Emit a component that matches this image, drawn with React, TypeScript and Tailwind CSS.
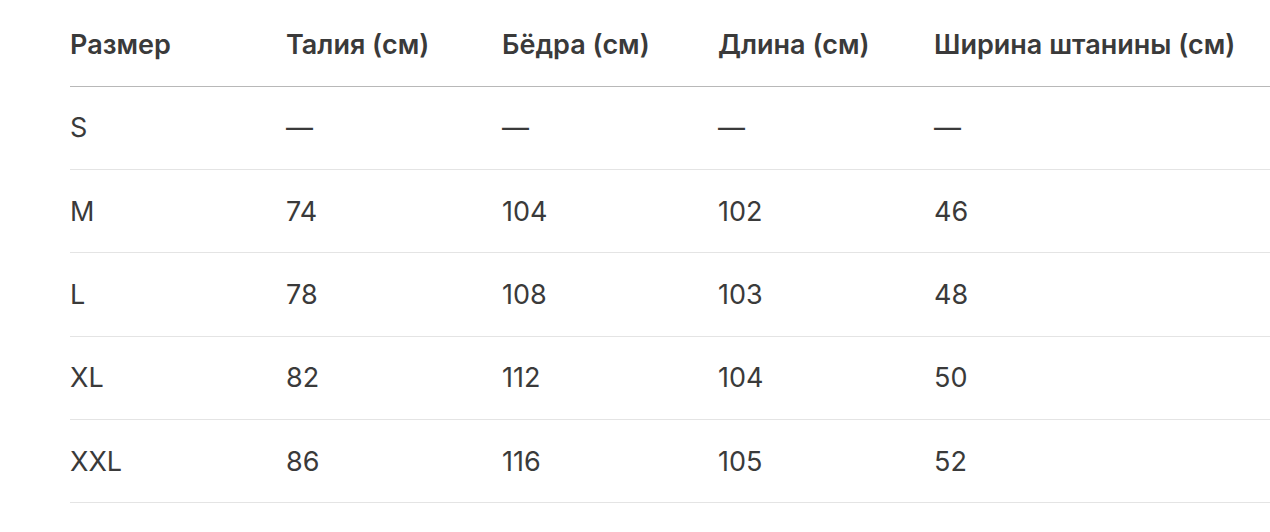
const HEAD = ["Размер", "Талия (см)", "Бёдра (см)", "Длина (см)", "Ширина штанины (см)"];

const ROWS = [
  ["S", "—", "—", "—", "—"],
  ["M", "74", "104", "102", "46"],
  ["L", "78", "108", "103", "48"],
  ["XL", "82", "112", "104", "50"],
  ["XXL", "86", "116", "105", "52"],
];

export default function App() {
  return (
    <div className="min-h-screen bg-white pl-[70px] pt-[3px] font-['Inter',sans-serif] text-[#3a3a3a]">
      <table className="w-[1200px] table-fixed border-collapse text-left">
        <colgroup>
          <col className="w-[216px]" />
          <col className="w-[216px]" />
          <col className="w-[216px]" />
          <col className="w-[216px]" />
          <col />
        </colgroup>
        <thead>
          <tr className="h-[83px] border-b border-[#b8b8b8]">
            {HEAD.map((h) => (
              <th key={h} className="p-0 align-middle text-[27px] leading-none font-semibold whitespace-nowrap text-[#3a3a3a]">
                {h}
              </th>
            ))}
          </tr>
        </thead>
        <tbody>
          {ROWS.map((r) => (
            <tr key={r[0]} className="h-[83.4px] border-b border-[#e4e4e4]">
              {r.map((c, i) => (
                <td key={i} className="p-0 align-middle text-[27px] leading-none font-normal">
                  {c}
                </td>
              ))}
            </tr>
          ))}
        </tbody>
      </table>
    </div>
  );
}
